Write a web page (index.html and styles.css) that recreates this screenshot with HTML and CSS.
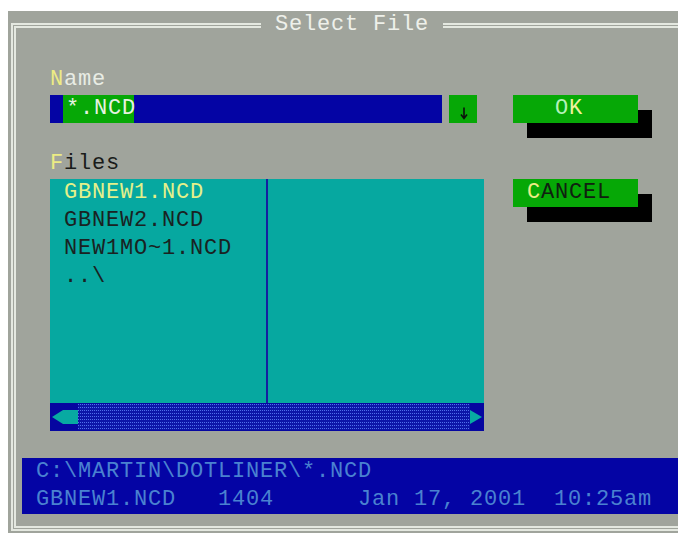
FILE: index.html
```html
<!DOCTYPE html>
<html>
<head>
<meta charset="utf-8">
<title>Select File</title>
<link rel="stylesheet" href="styles.css">
</head>
<body>
<div class="screen">
  <fieldset class="dialog">
    <legend class="title">Select File</legend>
    <div class="body">
      <div class="main">
        <div class="label"><span class="hot">N</span><span class="light">ame</span></div>
        <div class="name-row">
          <div class="name-field"><span class="name-value">*.NCD</span></div>
          <div class="drop">
            <svg class="drop-icon" width="28" height="28" viewBox="0 0 28 28">
              <path d="M15 12.5V23.5M12 19.5L15 23.5L18 19.5" fill="none" stroke="#0c120c" stroke-width="1.6"/>
            </svg>
          </div>
        </div>
        <div class="label files-label"><span class="hot">F</span><span class="dark">iles</span></div>
        <div class="list">
          <ul class="col col-left">
            <li class="current">GBNEW1.NCD</li>
            <li>GBNEW2.NCD</li>
            <li>NEW1MO~1.NCD</li>
            <li>..\</li>
          </ul>
          <ul class="col col-right"></ul>
        </div>
        <div class="scrollbar">
          <svg class="arrow" width="28" height="28" viewBox="0 0 28 28">
            <polygon points="2,14 13,7 28,7 28,21 13,21" fill="#08aaa2"/>
          </svg>
          <div class="track"></div>
          <svg class="arrow" width="14" height="28" viewBox="0 0 14 28">
            <polygon points="0,7 12,14 0,21" fill="#08aaa2"/>
          </svg>
        </div>
      </div>
      <div class="buttons">
        <div class="btn btn-ok"><span class="ok-o">O</span><span class="ok-k">K</span></div>
        <div class="btn btn-cancel"><span class="hot">C</span><span class="btn-dark">ANCEL</span></div>
      </div>
    </div>
    <div class="status">
      <div class="status-line">C:\MARTIN\DOTLINER\*.NCD</div>
      <div class="status-line">GBNEW1.NCD   1404      Jan 17, 2001  10:25am</div>
    </div>
  </fieldset>
</div>
</body>
</html>
```
FILE: styles.css
```css
html,
body {
  margin: 0;
  overflow: hidden;
  background: #ffffff;
}

body {
  width: 678px;
  height: 533px;
  box-sizing: border-box;
  padding: 11px 0 0 8px;
}

/* text-mode screen: 14px x 28px character cells */
.screen {
  width: 700px;
  height: 530px;
  box-sizing: border-box;
  padding-left: 3px;
  background: #a0a49c;
  font-family: "Liberation Mono", "Courier New", monospace;
  font-size: 22px;
  letter-spacing: 0.8px;
  line-height: 28px;
  color: #e8ece4;
}

.dialog {
  margin: 0;
  padding: 0 0 12px;
  min-width: 0;
  border: 5px double #e4e8e0;
}

.title {
  margin-left: 245px;
  padding: 0 14px;
  height: 28px;
  line-height: 28px;
  color: #eef0ea;
}

.body {
  display: grid;
  grid-template-columns: 434px 140px;
  column-gap: 29px;
  padding: 27px 0 0 34px;
}

.label {
  height: 28px;
  white-space: pre;
}

.hot {
  color: #ecec84;
}

.light {
  color: #e8ece4;
}

.dark {
  color: #1a1c1a;
}

.name-row {
  display: flex;
  height: 28px;
  margin-top: 1px;
}

.name-field {
  width: 392px;
  background: #0404a4;
}

.name-value {
  display: inline-block;
  width: 68px;
  margin-left: 13px;
  padding-left: 3px;
  background: #06a806;
  color: #e6f2e0;
}

.drop {
  width: 28px;
  margin-left: 7px;
  background: #06a806;
}

.drop-icon {
  display: block;
}

.files-label {
  margin-top: 27px;
}

.list {
  display: flex;
  height: 224px;
  margin-top: 1px;
  background: #06a8a0;
}

.col {
  margin: 0;
  padding: 0 0 0 14px;
  list-style: none;
  color: #1a2222;
}

.col-left {
  width: 202px;
  border-right: 2px solid #1420a0;
}

.col li {
  height: 28px;
  white-space: pre;
}

.col .current {
  color: #e4f08a;
}

.scrollbar {
  display: flex;
  align-items: center;
  height: 28px;
  background: #0606a0;
}

.arrow {
  display: block;
  flex: none;
}

.track {
  flex: 1;
  height: 26px;
  background-color: #5070ec;
  background-image:
    repeating-linear-gradient(to right, transparent 0 1px, #0c16a8 1px 2px),
    repeating-linear-gradient(to bottom, transparent 0 1px, #0c16a8 1px 3px);
}

.buttons {
  display: flex;
  flex-direction: column;
  padding-top: 29px;
}

.btn {
  width: 125px;
  height: 28px;
  background: #06a806;
  box-shadow: 14px 15px 0 #000000;
  white-space: pre;
}

.btn-ok {
  padding-left: 42px;
  box-sizing: border-box;
}

.ok-o {
  color: #b4f2b8;
}

.ok-k {
  color: #eef29c;
}

.btn-cancel {
  margin-top: 56px;
  padding-left: 14px;
  box-sizing: border-box;
}

.btn-dark {
  color: #102010;
}

.status {
  margin: 27px 0 0 6px;
  padding-left: 14px;
  background: #0404a4;
  color: #4a82d0;
}

.status-line {
  height: 28px;
  white-space: pre;
}
```
